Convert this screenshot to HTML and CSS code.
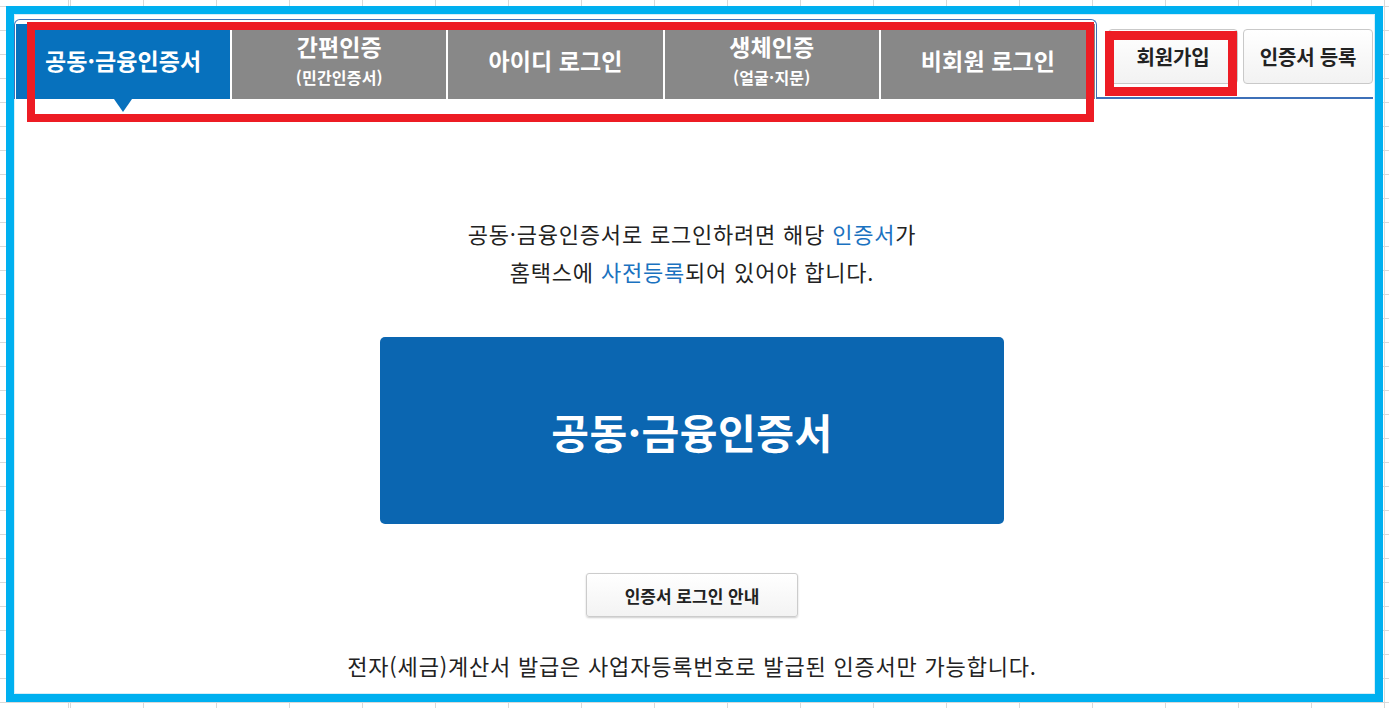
FILE: index.html
```html
<!DOCTYPE html>
<html lang="ko">
<head>
<meta charset="utf-8">
<title>홈택스 로그인</title>
<link rel="stylesheet" href="styles.css">
</head>
<body>
<div class="frame">
  <div class="tabbar">
    <ul class="tabs">
      <li class="tab active"><span class="t1">공동·금융인증서</span></li>
      <li class="tab two"><span class="t1">간편인증</span><span class="t2">(민간인증서)</span></li>
      <li class="tab"><span class="t1">아이디 로그인</span></li>
      <li class="tab two"><span class="t1">생체인증</span><span class="t2">(얼굴·지문)</span></li>
      <li class="tab"><span class="t1">비회원 로그인</span></li>
    </ul>
    <div class="side">
      <button class="btn">회원가입</button>
      <button class="btn">인증서 등록</button>
    </div>
  </div>

  <div class="content">
    <p class="notice">공동·금융인증서로 로그인하려면 해당 <span class="hl">인증서</span>가<br>홈택스에 <span class="hl">사전등록</span>되어 있어야 합니다.</p>
    <button class="big">공동·금융인증서</button>
    <button class="guide">인증서 로그인 안내</button>
    <p class="foot">전자(세금)계산서 발급은 사업자등록번호로 발급된 인증서만 가능합니다.</p>
  </div>

  <div class="mark mark-tabs"></div>
  <div class="mark mark-join"></div>
</div>
</body>
</html>
```

FILE: styles.css
```css
html, body {
  margin: 0;
  padding: 0;
}
body {
  width: 1389px;
  height: 708px;
  overflow: hidden;
  background-color: #fff;
  background-image:
    repeating-linear-gradient(to right, #d9d9d9 0, #d9d9d9 1px, transparent 1px, transparent 73px),
    repeating-linear-gradient(to bottom, #d9d9d9 0, #d9d9d9 1px, transparent 1px, transparent 24px);
  background-position: 70px 0, 0 6px;
  font-family: "Noto Sans CJK KR", "Noto Sans", sans-serif;
  color: #222;
}
.frame {
  position: relative;
  margin: 6px;
  width: 1377px;
  height: 696px;
  box-sizing: border-box;
  border: 8px solid #00b0f0;
  background: #fff;
  box-shadow: inset 0 0 0 1px #d6eef8;
}
.tabbar {
  display: flex;
  width: 1359px;
  margin-top: 5px;
  height: 80px;
}
.tabs {
  list-style: none;
  margin: 0;
  width: 1083px;
  height: 80px;
  box-sizing: border-box;
  border: 1px solid #3d70b8;
  border-bottom: 0;
  border-radius: 6px 6px 0 0;
  padding: 4px 1px 0 1px;
  display: flex;
  gap: 2px;
}
.tab {
  position: relative;
  flex: 1;
  background: #888888;
  color: #fff;
  display: flex;
  flex-direction: column;
  align-items: center;
  justify-content: center;
  padding-bottom: 3px;
  box-sizing: border-box;
}
.tab.active {
  background: #0771bd;
}
.tab.active::after {
  content: "";
  position: absolute;
  left: 50%;
  bottom: -13px;
  margin-left: -9px;
  border-left: 9px solid transparent;
  border-right: 9px solid transparent;
  border-top: 13px solid #0771bd;
}
.t1 {
  font-size: 23px;
  font-weight: 700;
  line-height: 28px;
  letter-spacing: 0.1px;
}
.t2 {
  margin-top: 6px;
  font-size: 16px;
  font-weight: 700;
  line-height: 22px;
  letter-spacing: 0.2px;
}
.side {
  flex: 1;
  display: flex;
  gap: 5px;
  padding: 10px 0 0 11px;
  border-bottom: 2px solid #3d70b8;
  box-sizing: border-box;
  height: 80px;
}
.btn {
  width: 130px;
  height: 55px;
  border: 1px solid #c9c9c9;
  border-radius: 4px;
  background: linear-gradient(#ffffff, #f2f2f2);
  font-family: inherit;
  font-size: 20px;
  font-weight: 700;
  color: #222;
  padding: 0;
  letter-spacing: -0.2px;
}
.content {
  display: flex;
  flex-direction: column;
  align-items: center;
  padding-top: 115px;
  padding-right: 5px;
}
.notice {
  margin: 0;
  text-align: center;
  font-size: 22px;
  line-height: 38px;
  color: #222;
  letter-spacing: 0.8px;
}
.hl {
  color: #1a72c0;
}
.big {
  margin-top: 47px;
  width: 624px;
  height: 187px;
  border: 0;
  border-radius: 5px;
  background: #0b66b1;
  color: #fff;
  font-family: inherit;
  font-size: 41px;
  font-weight: 700;
  letter-spacing: 0.5px;
  padding: 0;
}
.guide {
  margin-top: 49px;
  width: 212px;
  height: 44px;
  border: 1px solid #cccccc;
  border-radius: 3px;
  background: linear-gradient(#ffffff, #f3f3f3);
  box-shadow: 0 1px 2px rgba(0,0,0,0.2);
  font-family: inherit;
  font-size: 17px;
  font-weight: 700;
  color: #222;
  padding: 0;
  letter-spacing: 0;
}
.foot {
  margin: 29px 0 0;
  font-size: 22px;
  line-height: 38px;
  color: #222;
  letter-spacing: 0.8px;
}
.mark {
  position: absolute;
  box-sizing: border-box;
  border-style: solid;
  border-color: #ed1c24;
  pointer-events: none;
}
.mark-tabs {
  left: 13px;
  top: 8px;
  width: 1067px;
  height: 100px;
  border-width: 8px;
}
.mark-join {
  left: 1091px;
  top: 17px;
  width: 132px;
  height: 65px;
  border-width: 9px;
}
```
